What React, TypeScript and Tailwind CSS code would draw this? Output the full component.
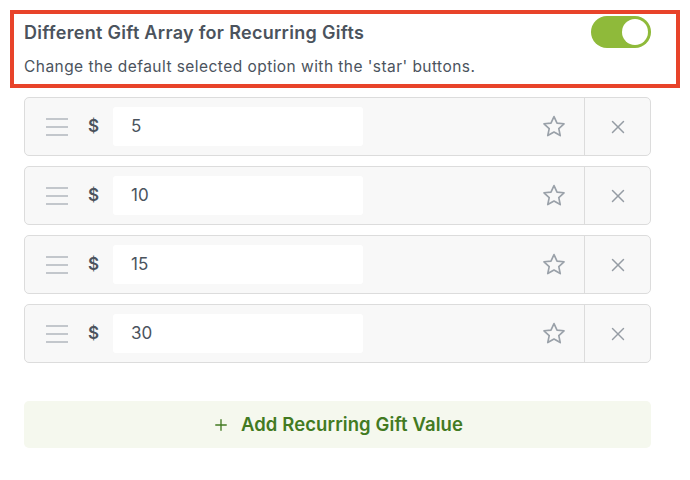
import { X, Plus } from "lucide-react";

const values = [5, 10, 15, 30];

function Handle() {
  return (
    <svg width="22" height="18" viewBox="0 0 22 18" className="text-[#c3c7cc]">
      <rect x="0" y="0" width="22" height="2" fill="currentColor" />
      <rect x="0" y="8" width="22" height="2" fill="currentColor" />
      <rect x="0" y="16" width="22" height="2" fill="currentColor" />
    </svg>
  );
}

function Star() {
  return (
    <svg width="26" height="25" viewBox="0 0 24 24" fill="none" stroke="#9aa1a9" strokeWidth="1.6" strokeLinejoin="round">
      <path d="M12 2.5l2.9 6.2 6.7.7-5 4.6 1.4 6.7L12 17.3l-6 3.4 1.4-6.7-5-4.6 6.7-.7z" />
    </svg>
  );
}

export default function App() {
  return (
    <div className="w-[690px] h-[480px] bg-white" style={{ fontFamily: "Inter, 'Liberation Sans', sans-serif" }}>
      <div className="pt-[10px] pl-[10px] pr-[10px]">
        {/* header box */}
        <div className="border-[4px] border-[#e8432a] h-[78px] pl-[10px] pr-[25px] pt-[2px]">
          <div className="flex items-center justify-between">
            <h2 className="text-[18px] font-semibold text-[#4b535d] tracking-[0.3px]">Different Gift Array for Recurring Gifts</h2>
            <div className="w-[60px] h-[32px] rounded-full bg-[#8fba3a] flex items-center justify-end pr-[3px]">
              <div className="w-[26px] h-[26px] rounded-full bg-white" />
            </div>
          </div>
          <p className="mt-[7px] text-[15.5px] text-[#4b535d] tracking-[0.45px]">Change the default selected option with the 'star' buttons.</p>
        </div>
      </div>

      <div className="px-[24px] mt-[9px] w-[675px] flex flex-col gap-[10px]">
        {values.map((v) => (
          <div key={v} className="h-[59px] rounded-[5px] border border-[#dcdcdc] bg-[#f8f8f8] flex items-stretch">
            <div className="flex items-center flex-1">
              <div className="ml-[21px]"><Handle /></div>
              <span className="ml-[20px] text-[17px] font-semibold text-[#4b535d]">$</span>
              <div className="ml-[14px] w-[250px] h-[39px] bg-white rounded-[3px] flex items-center pl-[18px] text-[17px] text-[#4b535d]">{v}</div>
              <div className="ml-auto mr-[17px]"><Star /></div>
            </div>
            <div className="w-[66px] border-l border-[#dcdcdc] flex items-center justify-center">
              <X className="w-[22px] h-[22px] text-[#959ca4]" strokeWidth={1.6} />
            </div>
          </div>
        ))}

        <button className="mt-[28px] h-[47px] rounded-[5px] bg-[#f5f8ee] flex items-center justify-center gap-[11px] text-[#427a22]">
          <Plus className="w-[18px] h-[18px]" strokeWidth={1.8} />
          <span className="text-[18.5px] font-semibold tracking-[0.1px]">Add Recurring Gift Value</span>
        </button>
      </div>
    </div>
  );
}
